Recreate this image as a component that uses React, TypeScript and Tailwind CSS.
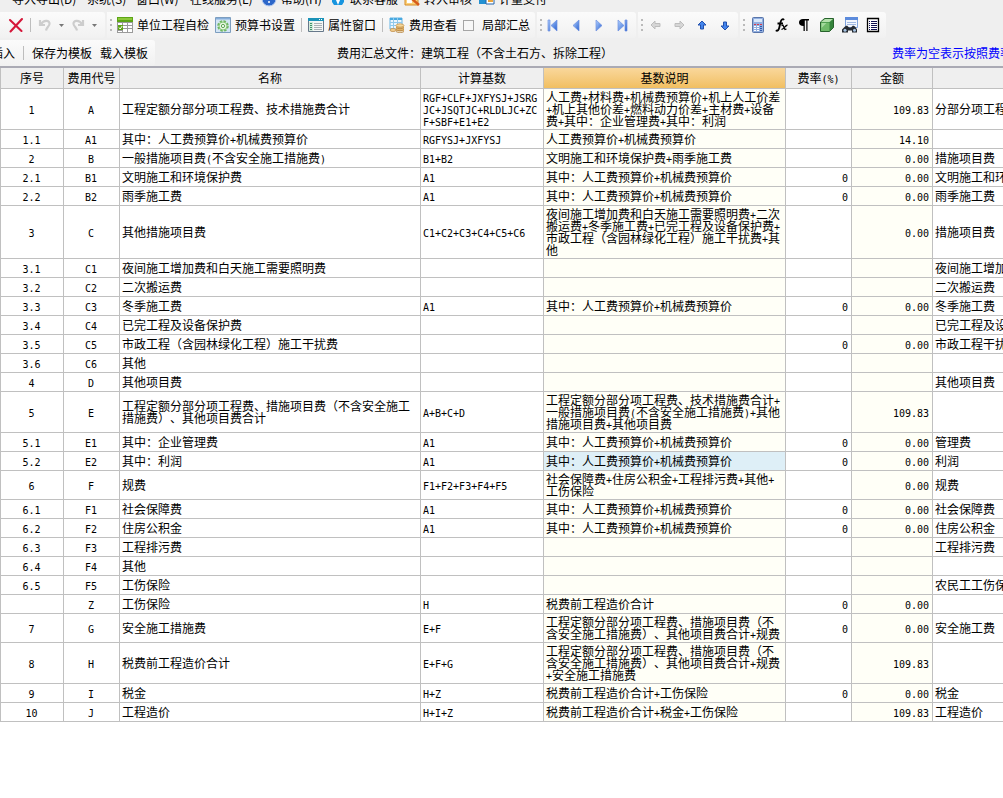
import type { ReactNode } from "react";

type Row = {
  no: string;
  code: string;
  name: string;
  base?: string;
  desc?: string;
  rate?: string;
  amount?: string;
  type?: string;
  active?: boolean;
};

const LABOR = "其中：人工费预算价+机械费预算价";

const rows: Row[] = [
  { no: "1", code: "A", name: "工程定额分部分项工程费、技术措施费合计", base: "RGF+CLF+JXFYSJ+JSRGJC+JSQTJC+RLDLJC+ZCF+SBF+E1+E2", desc: "人工费+材料费+机械费预算价+机上人工价差+机上其他价差+燃料动力价差+主材费+设备费+其中：企业管理费+其中：利润", amount: "109.83", type: "分部分项工程费" },
  { no: "1.1", code: "A1", name: LABOR, base: "RGFYSJ+JXFYSJ", desc: "人工费预算价+机械费预算价", amount: "14.10" },
  { no: "2", code: "B", name: "一般措施项目费(不含安全施工措施费)", base: "B1+B2", desc: "文明施工和环境保护费+雨季施工费", amount: "0.00", type: "措施项目费" },
  { no: "2.1", code: "B1", name: "文明施工和环境保护费", base: "A1", desc: LABOR, rate: "0", amount: "0.00", type: "文明施工和环境保护费" },
  { no: "2.2", code: "B2", name: "雨季施工费", base: "A1", desc: LABOR, rate: "0", amount: "0.00", type: "雨季施工费" },
  { no: "3", code: "C", name: "其他措施项目费", base: "C1+C2+C3+C4+C5+C6", desc: "夜间施工增加费和白天施工需要照明费+二次搬运费+冬季施工费+已完工程及设备保护费+市政工程（含园林绿化工程）施工干扰费+其他", amount: "0.00", type: "措施项目费" },
  { no: "3.1", code: "C1", name: "夜间施工增加费和白天施工需要照明费", type: "夜间施工增加费" },
  { no: "3.2", code: "C2", name: "二次搬运费", type: "二次搬运费" },
  { no: "3.3", code: "C3", name: "冬季施工费", base: "A1", desc: LABOR, rate: "0", amount: "0.00", type: "冬季施工费" },
  { no: "3.4", code: "C4", name: "已完工程及设备保护费", type: "已完工程及设备保护费" },
  { no: "3.5", code: "C5", name: "市政工程（含园林绿化工程）施工干扰费", rate: "0", amount: "0.00", type: "市政工程干扰费" },
  { no: "3.6", code: "C6", name: "其他" },
  { no: "4", code: "D", name: "其他项目费", type: "其他项目费" },
  { no: "5", code: "E", name: "工程定额分部分项工程费、措施项目费（不含安全施工措施费）、其他项目费合计", base: "A+B+C+D", desc: "工程定额分部分项工程费、技术措施费合计+一般措施项目费(不含安全施工措施费)+其他措施项目费+其他项目费", amount: "109.83" },
  { no: "5.1", code: "E1", name: "其中：企业管理费", base: "A1", desc: LABOR, rate: "0", amount: "0.00", type: "管理费" },
  { no: "5.2", code: "E2", name: "其中：利润", base: "A1", desc: LABOR, rate: "0", amount: "0.00", type: "利润", active: true },
  { no: "6", code: "F", name: "规费", base: "F1+F2+F3+F4+F5", desc: "社会保障费+住房公积金+工程排污费+其他+工伤保险", amount: "0.00", type: "规费" },
  { no: "6.1", code: "F1", name: "社会保障费", base: "A1", desc: LABOR, rate: "0", amount: "0.00", type: "社会保障费" },
  { no: "6.2", code: "F2", name: "住房公积金", base: "A1", desc: LABOR, rate: "0", amount: "0.00", type: "住房公积金" },
  { no: "6.3", code: "F3", name: "工程排污费", type: "工程排污费" },
  { no: "6.4", code: "F4", name: "其他" },
  { no: "6.5", code: "F5", name: "工伤保险", type: "农民工工伤保险" },
  { no: "", code: "Z", name: "工伤保险", base: "H", desc: "税费前工程造价合计", rate: "0", amount: "0.00" },
  { no: "7", code: "G", name: "安全施工措施费", base: "E+F", desc: "工程定额分部分项工程费、措施项目费（不含安全施工措施费）、其他项目费合计+规费", rate: "0", amount: "0.00", type: "安全施工费" },
  { no: "8", code: "H", name: "税费前工程造价合计", base: "E+F+G", desc: "工程定额分部分项工程费、措施项目费（不含安全施工措施费）、其他项目费合计+规费+安全施工措施费", amount: "109.83" },
  { no: "9", code: "I", name: "税金", base: "H+Z", desc: "税费前工程造价合计+工伤保险", rate: "0", amount: "0.00", type: "税金" },
  { no: "10", code: "J", name: "工程造价", base: "H+I+Z", desc: "税费前工程造价合计+税金+工伤保险", amount: "109.83", type: "工程造价" },
];

// Latin runs take a half-width face, so two of them are as wide as one hanzi
const Mixed = ({ text = "" }: { text?: string }) => (
  <>
    {text.split(/([\x20-\x7e]+)/).map((part, i) =>
      i % 2 ? (
        <span key={i} className="font-['DejaVu_Sans_Mono',monospace] text-[10px] leading-[0px]">
          {part}
        </span>
      ) : (
        part
      )
    )}
  </>
);

const Icon = ({ children }: { children: ReactNode }) => (
  <svg viewBox="0 0 16 16" className="h-4 w-4 shrink-0" aria-hidden="true">
    {children}
  </svg>
);

const DeleteIcon = () => (
  <Icon>
    <path d="M2 3 13.500 14M14 2 2.500 14.500" stroke="#d5173a" strokeWidth="2.100" strokeLinecap="round" />
  </Icon>
);

const UndoIcon = () => (
  <Icon>
    <path d="M3 3v5h5M4 7.500C6 3 13 2.500 12.500 7c-.3 2.500-3 3-3.500 6.500" fill="none" stroke="#cdcdcd" strokeWidth="2.200" />
  </Icon>
);

const RedoIcon = () => (
  <Icon>
    <path d="M13 3v5H8M12 7.500C10 3 3 2.500 3.500 7c.3 2.500 3 3 3.500 6.500" fill="none" stroke="#cdcdcd" strokeWidth="2.200" />
  </Icon>
);

const CheckTableIcon = () => (
  <Icon>
    <path d="M0 0h16v16H0z" fill="#9a9a9a" />
    <path d="M0 0h16v5H0z" fill="#5da516" />
    <path d="M1 1h14v2H1z" fill="#8cc83a" />
    <path d="M1 6h4v2H1zm5 0h4v2H6zm5 0h4v2h-4zM6 9h4v2H6zm5 0h4v2h-4zM6 12h4v3H6zm5 0h4v3h-4z" fill="#fff" />
    <path d="M1 8h5v5H1z" fill="#5da516" />
    <path d="M1 14h4v1H1z" fill="#fff" />
    <path d="m2 10.500 1.200 1.500L5.200 9" fill="none" stroke="#fff" />
  </Icon>
);

const BookSettingsIcon = () => (
  <Icon>
    <path d="M.5.5h15v15H.5z" fill="#d3e5f5" stroke="#7d9ec0" />
    <path d="M1 1h14v1.500H1z" fill="#86aedb" />
    <circle cx="8" cy="9" r="5" fill="#e6f4df" stroke="#6fb562" strokeWidth="1.500" strokeDasharray="2.600 1.300" />
    <circle cx="8" cy="9" r="4" fill="none" stroke="#85c579" />
    <circle cx="8" cy="9" r="1.600" fill="#fff" stroke="#59a650" />
  </Icon>
);

const PropertyIcon = () => (
  <Icon>
    <path d="M.5 1.500h15v13H.5z" fill="#f4f7f5" stroke="#66788a" />
    <path d="M0 1h16v3H0z" fill="#1c93b8" />
    <path d="M11 2h1v1h-1zm2 0h1v1h-1z" fill="#fff" />
    <path d="M1 5h4v9H1z" fill="#d3eadb" />
    <path d="M2 6.500h2m-2 2h2m-2 2h2m-2 2h2" stroke="#3d9569" />
    <path d="M6 6.500h8m-8 2h8m-8 2h8m-8 2h8" stroke="#aab1b5" />
  </Icon>
);

const CostViewIcon = () => (
  <Icon>
    <path d="M1 1h12v11H1z" fill="#eaf5fd" stroke="#65b5e5" />
    <path d="M1 1h12v2H1z" fill="#48a9e0" />
    <path d="M1 5.500h12M1 8.500h12M4.500 1v11M8.500 1v11" stroke="#8fc9ec" />
    <path d="M7 8.500h8v6H7z" fill="#e2b46b" />
    <ellipse cx="11" cy="8.500" rx="4" ry="1.700" fill="#f4d79a" stroke="#bd8b46" strokeWidth=".7" />
    <path d="M7 10.500c1 1.600 7 1.600 8 0m-8 2c1 1.600 7 1.600 8 0m-8 2c1 1.600 7 1.600 8 0" fill="none" stroke="#b48545" strokeWidth=".8" />
    <ellipse cx="4" cy="13" rx="3" ry="1.600" fill="#efc98a" stroke="#bd8b46" strokeWidth=".7" />
  </Icon>
);

const NavIcon = ({ d }: { d: string }) => (
  <Icon>
    <defs>
      <linearGradient id="navBlue" x1="0" y1="0" x2="1" y2="1">
        <stop offset="0" stopColor="#b4d3ff" />
        <stop offset="1" stopColor="#2860d0" />
      </linearGradient>
    </defs>
    <path d={d} fill="url(#navBlue)" stroke="#6d8fdf" strokeWidth=".7" />
  </Icon>
);

const ArrowIcon = ({ d, muted }: { d: string; muted?: boolean }) => (
  <Icon>
    <path d={d} fill={muted ? "#d6d6d6" : "#4384ec"} stroke={muted ? "#bdbdbd" : "#2351ad"} />
  </Icon>
);

const CalcIcon = () => (
  <Icon>
    <rect x="2.500" y=".5" width="11" height="15" rx="1" fill="#92afe0" stroke="#5875aa" />
    <path d="M4 2h8v3H4z" fill="#d9e8fb" />
    <path d="M4 7h2v1H4zm3 0h2v1H7zm3 0h2v1h-2z" fill="#d83b4b" />
    <path d="M4 9h2v1H4zm3 0h2v1H7zm-3 2h2v1H4zm3 0h2v1H7zm-3 2h2v1H4zm3 0h2v1H7z" fill="#fff" />
    <path d="M10 9h2v1h-2zm0 2h2v1h-2zm0 2h2v1h-2z" fill="#3158a8" />
  </Icon>
);

const FxIcon = () => (
  <Icon>
    <path d="M11 3C9.800 1.200 8.200 2.500 7.600 5L6.300 10.500c-.6 2.400-1.700 4-3.500 2.800M4.500 6.500h5.500" fill="none" stroke="#000" strokeWidth="1.800" />
    <path d="m8.500 8.500 1.500-.3 2 4.300 1.500-.5M14.500 8.300c-2-.7-3.500 4.300-6 4" fill="none" stroke="#000" strokeWidth="1.300" />
  </Icon>
);

const ParagraphIcon = () => (
  <Icon>
    <path d="M7 2h6v1.500h-1.500V14h-1.200V3.500H8.800V14H7.500V9C4.500 9 3 7.500 3 5.500S4.500 2 7 2Z" fill="#000" />
  </Icon>
);

const CubeIcon = () => (
  <Icon>
    <path d="m1.500 5 4-3.500h9v9l-4 4h-9z" fill="#35843b" stroke="#28632d" />
    <path d="m2 5 4-3h8l-3.500 3z" fill="#b5e1ad" />
    <path d="M2 5.500h8.500V14H2z" fill="#6fba69" />
    <path d="M2.500 6h5L2.500 11z" fill="#a4d99d" />
  </Icon>
);

const FindIcon = () => (
  <Icon>
    <path d="M3.500.5h12v10h-12z" fill="#f2f6fd" stroke="#7fa2dc" />
    <path d="M3 0h13v3H3z" fill="#5c8bdc" />
    <path d="M5 5.500h9m-9 2h9" stroke="#9fb8e2" />
    <path d="m3 9.500 2-1 2 2h2l2-2 2 1 2 3v3h-5v-2H6v2H0v-3z" fill="#252a31" />
    <circle cx="3" cy="13.300" r="1.500" fill="#a6c3e2" />
    <circle cx="12.500" cy="13.300" r="1.500" fill="#a6c3e2" />
  </Icon>
);

const ListIcon = () => (
  <Icon>
    <path d="M2.500 1.500h11v13h-11z" fill="#fff" stroke="#000" strokeWidth="1.300" />
    <path d="M4 4.500h1m1 0h6m-8 2h1m1 0h6m-8 2h1m1 0h6m-8 2h1m1 0h6m-8 2h1m1 0h6" stroke="#101050" />
  </Icon>
);

const Grip = () => (
  <span className="grid gap-[3px]" aria-hidden="true">
    <i className="h-[2px] w-[2px] bg-[#bababa]" />
    <i className="h-[2px] w-[2px] bg-[#bababa]" />
    <i className="h-[2px] w-[2px] bg-[#bababa]" />
  </span>
);

const Sep = () => <span className="h-[14px] w-px shrink-0 bg-[#bdbdbd]" />;

const Caret = () => (
  <svg viewBox="0 0 5 3" className="h-[3px] w-[5px]" aria-hidden="true">
    <path d="M0 0h5L2.500 3z" fill="#777" />
  </svg>
);

const ToolButton = ({ label, children }: { label: string; children: ReactNode }) => (
  <button type="button" aria-label={label} className="flex items-center">
    {children}
  </button>
);

const TextButton = ({ label, children }: { label: string; children?: ReactNode }) => (
  <button type="button" className="flex items-center gap-1 whitespace-nowrap">
    {children}
    {label}
  </button>
);

const menu = [
  { label: "导入导出(D)", width: "w-[75px]" },
  { label: "系统(S)", width: "w-[49px]" },
  { label: "窗口(W)", width: "w-[54px]" },
  { label: "在线服务(L)", width: "w-[71px]" },
];

const MenuBar = () => (
  <nav className="flex h-[9px] items-end overflow-hidden whitespace-nowrap pl-3 text-[12px]">
    <div className="flex h-5 items-center">
      {menu.map((item) => (
        <button key={item.label} type="button" className={`${item.width} shrink-0 text-left`}>
          {item.label}
        </button>
      ))}
      <button type="button" className="flex w-[69px] items-center gap-1">
        <Icon>
          <circle cx="8" cy="8" r="7" fill="#2d67c9" stroke="#b8cdf0" />
          <path d="M6 6c0-3 5-3 4 0-.3 1-2 1.500-2 3m0 1v2" fill="none" stroke="#fff" strokeWidth="1.500" />
        </Icon>
        帮助(H)
      </button>
      <button type="button" className="flex w-[74px] items-center gap-1">
        <Icon>
          <path d="M2 7c0-8 12-8 12 0v4l-2 3H4l-2-3z" fill="#1895df" />
          <path d="M6 9h4l-2 5z" fill="#fff" />
        </Icon>
        联系客服
      </button>
      <button type="button" className="flex w-[75px] items-center gap-1">
        <Icon>
          <path d="M1 3h13v11H1z" fill="#fbd17a" stroke="#d78b25" />
          <path d="M3 9h5v3H3z" fill="#fff" />
          <path d="m7 7 8 7" stroke="#d65a1b" strokeWidth="2.500" />
        </Icon>
        转入审核
      </button>
      <button type="button" className="flex items-center gap-1">
        <Icon>
          <path d="M0 4h9v9H0z" fill="#2491d2" />
          <path d="M7 3h8v10H7z" fill="#fff" stroke="#2563a8" />
          <path d="M9 8h5v3H9z" fill="#eba43a" />
        </Icon>
        计量支付
      </button>
    </div>
  </nav>
);

const group = "flex h-[26px] items-center rounded-r-[3px] bg-linear-to-b from-[#fbfbfb] to-[#f1f1f1]";

const Toolbar = () => (
  <div className="mb-px mt-[3px] flex gap-[2px] text-[12px]">
    <div className={`${group} w-[105px] gap-[6px] pl-2`}>
      <ToolButton label="删除">
        <DeleteIcon />
      </ToolButton>
      <Sep />
      <ToolButton label="撤销">
        <UndoIcon />
      </ToolButton>
      <Caret />
      <ToolButton label="恢复">
        <RedoIcon />
      </ToolButton>
      <Caret />
    </div>

    <div className={`${group} w-[428px] pl-[3px]`}>
      <Grip />
      <div className="ml-[5px] flex items-center gap-[6px]">
        <TextButton label="单位工程自检">
          <CheckTableIcon />
        </TextButton>
        <TextButton label="预算书设置">
          <BookSettingsIcon />
        </TextButton>
        <Sep />
        <TextButton label="属性窗口">
          <PropertyIcon />
        </TextButton>
        <Sep />
        <TextButton label="费用查看">
          <CostViewIcon />
        </TextButton>
        <label className="flex items-center gap-2 whitespace-nowrap">
          <input type="checkbox" className="h-[11px] w-[11px] appearance-none border border-[#a5a5a5] bg-[#f7f7f7]" />
          局部汇总
        </label>
      </div>
    </div>

    <div className={`${group} w-[99px] pl-[3px]`}>
      <Grip />
      <div className="ml-[3px] flex items-center gap-[7px]">
        <ToolButton label="首条">
          <NavIcon d="M3 3h2v11H3zm9 0v11L6 8.500z" />
        </ToolButton>
        <ToolButton label="上一条">
          <NavIcon d="M11 3v11L5 8.500z" />
        </ToolButton>
        <ToolButton label="下一条">
          <NavIcon d="M5 3v11l6-5.500z" />
        </ToolButton>
        <ToolButton label="末条">
          <NavIcon d="M11 3h2v11h-2zM4 3v11l6-5.500z" />
        </ToolButton>
      </div>
    </div>

    <div className={`${group} w-[100px] pl-[3px]`}>
      <Grip />
      <div className="ml-[5px] flex items-center gap-[7px]">
        <ToolButton label="左移">
          <ArrowIcon muted d="m3 8 4-4v2.500h5v3H7V12z" />
        </ToolButton>
        <ToolButton label="右移">
          <ArrowIcon muted d="m13 8-4-4v2.500H4v3h5V12z" />
        </ToolButton>
        <ToolButton label="上移">
          <ArrowIcon d="m8 4 4 4H9.500v4h-3V8H4z" />
        </ToolButton>
        <ToolButton label="下移">
          <ArrowIcon d="m8 13 4-4H9.500V5h-3v4H4z" />
        </ToolButton>
      </div>
    </div>

    <div className={`${group} w-[146px] pl-[3px]`}>
      <Grip />
      <div className="ml-[5px] flex items-center gap-[7px]">
        <ToolButton label="计算器">
          <CalcIcon />
        </ToolButton>
        <ToolButton label="函数">
          <FxIcon />
        </ToolButton>
        <ToolButton label="段落">
          <ParagraphIcon />
        </ToolButton>
        <ToolButton label="模型">
          <CubeIcon />
        </ToolButton>
        <ToolButton label="查找">
          <FindIcon />
        </ToolButton>
        <ToolButton label="清单">
          <ListIcon />
        </ToolButton>
      </div>
    </div>
  </div>
);

const TemplateBar = () => (
  <div className="flex h-[27px] items-center overflow-hidden whitespace-nowrap text-[12px]">
    <div className={`${group} w-[155px] gap-2`}>
      <div className="flex w-[15px] justify-end overflow-hidden">
        <TextButton label="插入" />
      </div>
      <Sep />
      <TextButton label="保存为模板" />
      <TextButton label="载入模板" />
    </div>
    <p className="ml-[182px] flex-1">费用汇总文件：建筑工程（不含土石方、拆除工程）</p>
    <p className="w-[111px] shrink-0 text-[#0000ff]">费率为空表示按照费率100%计算</p>
  </div>
);

const th = "h-[21px] border-b border-r border-[#c0c0c0] p-0 font-normal leading-3";
const td = "h-[19px] border-b border-r border-[#c0c0c0] py-[2px] pl-[2px] pr-[3px] leading-3";

const CostTable = () => (
  <table className="w-full table-fixed border-separate border-spacing-0 border-t-2 border-t-[#aaaab4] bg-white text-[12px]">
    <colgroup>
      <col className="w-[64px]" />
      <col className="w-[56px]" />
      <col className="w-[301px]" />
      <col className="w-[123px]" />
      <col className="w-[242px]" />
      <col className="w-[66px]" />
      <col className="w-[81px]" />
      <col />
    </colgroup>
    <thead>
      <tr className="bg-[#efefef]">
        <th className={`${th} border-l`}>序号</th>
        <th className={th}>费用代号</th>
        <th className={th}>名称</th>
        <th className={th}>计算基数</th>
        <th className={`${th} bg-linear-to-b from-[#f9d79b] to-[#f1bf60]`}>基数说明</th>
        <th className={th}>
          <Mixed text="费率(%)" />
        </th>
        <th className={th}>金额</th>
        <th className="border-b border-[#c0c0c0]" />
      </tr>
    </thead>
    <tbody>
      {rows.map((row) => (
        <tr key={row.code}>
          <td className={`${td} border-l text-center`}>
            <Mixed text={row.no} />
          </td>
          <td className={`${td} text-center`}>
            <Mixed text={row.code} />
          </td>
          <td className={td}>
            <Mixed text={row.name} />
          </td>
          <td className={td}>
            <Mixed text={row.base} />
          </td>
          <td className={`${td} ${row.active ? "bg-[#deeff7]" : "bg-[#fffff7]"}`}>
            <Mixed text={row.desc} />
          </td>
          <td className={`${td} text-right`}>
            <Mixed text={row.rate} />
          </td>
          <td className={`${td} bg-[#fffff7] text-right`}>
            <Mixed text={row.amount} />
          </td>
          <td className="overflow-hidden whitespace-nowrap border-b border-[#c0c0c0] py-[2px] pl-[2px] leading-3">{row.type}</td>
        </tr>
      ))}
    </tbody>
  </table>
);

export default function App() {
  return (
    <div className="min-h-screen overflow-hidden bg-white font-['Noto_Sans_CJK_SC',sans-serif] text-black [line-break:anywhere] [text-spacing-trim:space-all]">
      <header className="bg-[#efefef]">
        <MenuBar />
        <Toolbar />
        <TemplateBar />
      </header>
      <CostTable />
    </div>
  );
}
